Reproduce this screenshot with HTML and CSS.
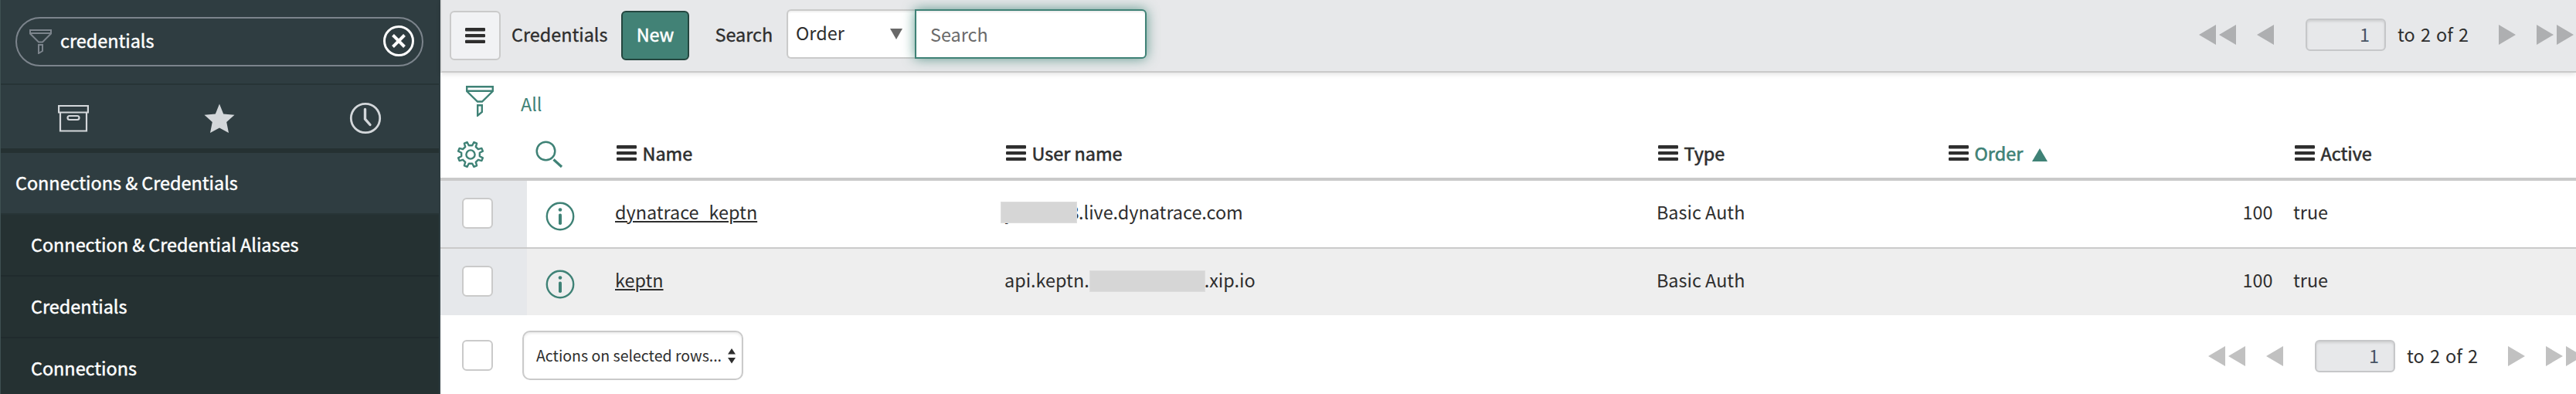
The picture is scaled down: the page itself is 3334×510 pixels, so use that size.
FILE: index.html
```html
<!DOCTYPE html>
<html lang="en">
<head>
<meta charset="utf-8">
<title>Credentials</title>
<link rel="stylesheet" href="styles.css">
</head>
<body>
<svg class="defs" width="0" height="0">
  <symbol id="funnel" viewBox="0 0 36 40">
    <path d="M1.2 1.2H34.8V7L21 20.5H15L1.2 7ZM1 6.7H35M15.2 25.2H20.8V34L15.2 38.6Z" fill="none" stroke="currentColor" stroke-width="2.4"/>
  </symbol>
  <symbol id="bars" viewBox="0 0 26 20">
    <path d="M0 1.2Q0 0 1.2 0H24.8Q26 0 26 1.2V3.4Q26 4.4 24.8 4.4H1.2Q0 4.4 0 3.4ZM0 9.2Q0 8 1.2 8H24.8Q26 8 26 9.2V11.2Q26 12.3 24.8 12.3H1.2Q0 12.3 0 11.2ZM0 17Q0 15.8 1.2 15.8H24.8Q26 15.8 26 17V18.9Q26 20 24.8 20H1.2Q0 20 0 18.9Z" fill="currentColor"/>
  </symbol>
  <symbol id="info" viewBox="0 0 38 38">
    <circle cx="19" cy="19" r="17.2" fill="none" stroke="currentColor" stroke-width="2.4"/>
    <circle cx="19" cy="10.5" r="2.3" fill="currentColor"/>
    <rect x="17" y="15.5" width="4" height="14.5" rx="1.8" fill="currentColor"/>
  </symbol>
  <symbol id="prev" viewBox="0 0 22 26"><path d="M22 0V26L0 13Z" fill="currentColor"/></symbol>
  <symbol id="next" viewBox="0 0 22 26"><path d="M0 0V26L22 13Z" fill="currentColor"/></symbol>
</svg>
<div class="app">
  <aside class="nav">
    <div class="nav-filter">
      <div class="pill">
        <svg class="pill-funnel" width="29" height="32" viewBox="0 0 29 32"><path d="M1 1H28V5.5L17 16.5H12L1 5.5ZM1 5H28M12 20H17V28L12 31Z" fill="none" stroke="currentColor" stroke-width="2"/></svg>
        <span class="pill-text">credentials</span>
        <svg width="40" height="40" viewBox="0 0 40 40"><circle cx="20" cy="20" r="18.5" fill="none" stroke="#fff" stroke-width="3"/><path d="M12.5 12.5L27.5 27.5M27.5 12.5L12.5 27.5" stroke="#fff" stroke-width="4"/></svg>
      </div>
    </div>
    <div class="nav-tabs">
      <div class="tab"><svg width="40" height="40" viewBox="0 0 40 40" fill="none" stroke="currentColor" stroke-width="2.2"><path d="M1.1 4H38.9V12.5H1.1ZM3 12.5V36.5H37V12.5"/><rect x="12.5" y="17" width="15" height="5" rx="2.5"/></svg></div>
      <div class="tab"><svg width="40" height="40" viewBox="0 0 40 40"><path d="M20 1.5L25.2 14.5L39.5 15.8L29.2 25L32 39L20 32.5L8 39L10.8 25L.5 15.8L14.8 14.5Z" fill="currentColor"/></svg></div>
      <div class="tab"><svg width="42" height="42" viewBox="0 0 42 42" fill="none" stroke="currentColor"><circle cx="21" cy="21" r="18.7" stroke-width="2.8"/><path d="M20.5 9.5V22L27 29.5" stroke-width="3.4" stroke-linecap="round"/></svg></div>
    </div>
    <div class="nav-head">Connections &amp; Credentials</div>
    <div class="nav-item">Connection &amp; Credential Aliases</div>
    <div class="nav-item">Credentials</div>
    <div class="nav-item">Connections</div>
  </aside>
  <main class="main">
    <header class="toolbar">
      <button class="menu-btn"><svg width="26" height="20"><use href="#bars"/></svg></button>
      <span class="title">Credentials</span>
      <button class="new-btn">New</button>
      <span class="search-label">Search</span>
      <div class="select"><span>Order</span><svg width="16" height="14" viewBox="0 0 16 14"><path d="M0 0H16L8 14Z" fill="#696969"/></svg></div>
      <div class="search-input">Search</div>
      <div class="pager pager-top">
        <svg class="tri" width="22" height="26"><use href="#prev"/></svg>
        <svg class="tri near" width="22" height="26"><use href="#prev"/></svg>
        <svg class="tri far" width="22" height="26"><use href="#prev"/></svg>
        <div class="page-input">1</div>
        <span class="page-text">to 2 of 2</span>
        <svg class="tri" width="22" height="26"><use href="#next"/></svg>
        <svg class="tri far" width="22" height="26"><use href="#next"/></svg>
        <svg class="tri near" width="22" height="26"><use href="#next"/></svg>
      </div>
    </header>
    <div class="crumbs">
      <svg class="crumb-funnel" width="36" height="40"><use href="#funnel"/></svg>
      <span class="crumb">All</span>
    </div>
    <div class="row head">
      <div class="c-gear"><svg width="36" height="36" viewBox="0 0 36 36" fill="none" stroke="#3f8276" stroke-width="2.4" stroke-linejoin="round"><circle cx="18" cy="18" r="5.6"/><path d="M29.8 20.2L33.9 22.4L32.4 26.1L27.9 24.8L24.8 27.9L26.1 32.4L22.4 33.9L20.2 29.8H15.8L13.6 33.9L9.9 32.4L11.2 27.9L8.1 24.8L3.6 26.1L2.1 22.4L6.2 20.2V15.8L2.1 13.6L3.6 9.9L8.1 11.2L11.2 8.1L9.9 3.6L13.6 2.1L15.8 6.2H20.2L22.4 2.1L26.1 3.6L24.8 8.1L27.9 11.2L32.4 9.9L33.9 13.6L29.8 15.8Z"/></svg></div>
      <div class="c-find"><svg width="36" height="36" viewBox="0 0 36 36" fill="none" stroke="#3f8276"><circle cx="13.5" cy="13.5" r="11.8" stroke-width="2.5"/><path d="M23.5 24.5L34 34" stroke-width="3.2"/></svg></div>
      <div class="c-name th"><svg width="26" height="20"><use href="#bars"/></svg><span>Name</span></div>
      <div class="c-user th"><svg width="26" height="20"><use href="#bars"/></svg><span>User name</span></div>
      <div class="c-type th"><svg width="26" height="20"><use href="#bars"/></svg><span>Type</span></div>
      <div class="c-order-head th"><svg width="26" height="20"><use href="#bars"/></svg><span class="sorted">Order</span><svg class="asc" width="20" height="17" viewBox="0 0 20 17"><path d="M0 17H20L10 0Z" fill="#3f8276"/></svg></div>
      <div class="c-active th"><svg width="26" height="20"><use href="#bars"/></svg><span>Active</span></div>
    </div>
    <div class="row body-row">
      <div class="c-check"><i class="box"></i></div>
      <div class="c-info"><svg width="38" height="38"><use href="#info"/></svg></div>
      <div class="c-name"><a class="link">dynatrace_keptn</a></div>
      <div class="c-user"><span class="lead">y<i class="redact"></i></span><span class="tail">8</span>.live.dynatrace.com</div>
      <div class="c-type">Basic Auth</div>
      <div class="c-order">100</div>
      <div class="c-active">true</div>
    </div>
    <div class="row body-row even">
      <div class="c-check"><i class="box"></i></div>
      <div class="c-info"><svg width="38" height="38"><use href="#info"/></svg></div>
      <div class="c-name"><a class="link">keptn</a></div>
      <div class="c-user">api.keptn.<i class="redact-inline"></i>.xip.io</div>
      <div class="c-type">Basic Auth</div>
      <div class="c-order">100</div>
      <div class="c-active">true</div>
    </div>
    <footer class="footer">
      <i class="box"></i>
      <div class="actions"><span>Actions on selected rows...</span><svg width="10" height="20" viewBox="0 0 10 20"><path d="M0 7.5L5 0L10 7.5ZM0 12H10L5 19.5Z" fill="#2e2e2e"/></svg></div>
      <div class="pager pager-bottom">
        <svg class="tri" width="22" height="26"><use href="#prev"/></svg>
        <svg class="tri near" width="22" height="26"><use href="#prev"/></svg>
        <svg class="tri far" width="22" height="26"><use href="#prev"/></svg>
        <div class="page-input">1</div>
        <span class="page-text">to 2 of 2</span>
        <svg class="tri" width="22" height="26"><use href="#next"/></svg>
        <svg class="tri far" width="22" height="26"><use href="#next"/></svg>
        <svg class="tri near" width="22" height="26"><use href="#next"/></svg>
      </div>
    </footer>
  </main>
</div>
</body>
</html>
```
FILE: styles.css
```css
* { box-sizing: border-box; }
body {
  margin: 0;
  overflow: hidden;
  background: #fff;
  color: #2e2e2e;
  font: 23.4px/32px "Noto Sans CJK SC", "Noto Sans", sans-serif;
}
svg { display: block; flex: none; }
.defs { position: absolute; }
.app { display: flex; width: 3334px; height: 510px; overflow: hidden; }

/* Navigator */
.nav {
  flex: none;
  width: 570px;
  border-left: 1px solid #3f5052;
  border-right: 2px solid #2f3d41;
  background: #253132;
  color: #fff;
  -webkit-text-stroke: .45px #fff;
}
.nav-filter {
  height: 110px;
  padding: 22px 20px 0 19px;
  border-bottom: 2px solid #273436;
  background: #2f3d41;
}
.pill {
  display: flex;
  height: 64px;
  padding: 9px 10px 0 16px;
  border: 2px solid #7c848c;
  border-radius: 32px;
}
.pill-funnel { margin-top: 5px; color: #7c848c; }
.pill-text { flex: 1; margin: 3px 0 0 11px; }
.nav-tabs {
  display: grid;
  grid-template-columns: repeat(3, 189px);
  height: 88px;
  border-bottom: 6px solid #253132;
  background: #2f3d41;
  color: #d3d7da;
}
.tab { display: flex; align-items: center; justify-content: center; padding: 4px 2px 0 0; }
.nav-head {
  height: 80px;
  padding: 22px 0 0 19px;
  border-bottom: 2px solid #273436;
  background: #2f3d41;
}
.nav-item {
  height: 80px;
  padding: 22px 0 0 39px;
  border-bottom: 2px solid #202b2d;
}

/* Toolbar */
.main { flex: 1; min-width: 0; background: #fff; }
.toolbar {
  display: flex;
  height: 94px;
  padding: 12px 0 0 10px;
  border-left: 2px solid #dcddde;
  border-bottom: 2px solid #cacaca;
  background: #e7e8ea;
  box-shadow: 0 2px 6px rgba(0, 0, 0, .12);
}
.menu-btn, .new-btn {
  display: flex;
  align-items: center;
  justify-content: center;
  height: 64px;
  margin: 2px 0 0;
  border-radius: 6px;
  font: inherit;
}
.menu-btn { width: 66px; padding: 0; border: 2px solid #cacaca; background: #f1f2f4; color: #2e2e2e; }
.title { width: 142px; margin: 16px 0 0 14px; -webkit-text-stroke: .35px; }
.new-btn {
  width: 88px;
  padding: 0 0 4px;
  border: 2px solid #24463f;
  background: #428276;
  color: #fff;
  -webkit-text-stroke: .5px;
}
.search-label { width: 92.5px; margin: 16px 0 0 33.5px; -webkit-text-stroke: .35px; }
.select {
  display: flex;
  justify-content: space-between;
  width: 166px;
  height: 64px;
  padding: 12px 16px 0 10px;
  border: 2px solid #cacaca;
  border-right: 0;
  border-radius: 6px 0 0 6px;
  background: #fff;
  box-shadow: inset 0 2px 2px rgba(0, 0, 0, .06);
}
.select svg { margin-top: 11px; }
.search-input {
  width: 300px;
  height: 64px;
  padding: 14px 0 0 18px;
  border: 2px solid #3f8276;
  border-radius: 0 6px 6px 0;
  background: #fff;
  box-shadow: inset 0 2px 2px rgba(0, 0, 0, .08), 0 0 16px rgba(50, 125, 110, .75);
  color: #6a6a6a;
}

/* Pagination */
.pager { display: flex; color: #aeafb1; }
.pager-top { margin: 12px 0 0 1362px; }
.tri { margin-top: 8px; }
.near { margin-left: 4px; }
.far { margin-left: 27px; }
.page-input {
  width: 104px;
  height: 42px;
  margin-left: 41px;
  padding: 2px 19px 0 0;
  border: 2px solid #c6c7c9;
  border-radius: 6px;
  background: #e7e8ea;
  box-shadow: inset 0 2px 3px rgba(0, 0, 0, .1);
  color: #485464;
  text-align: right;
}
.page-text { width: 131px; margin: 4px 0 0 15px; color: #2e2e2e; word-spacing: 2px; white-space: nowrap; }

/* List */
.crumbs { display: flex; height: 69px; padding: 17px 0 0 33px; color: #3f8276; }
.crumb { margin: 7px 0 0 35px; }
.row { display: grid; grid-template-columns: 112px 102px 504px 846px 376px 446px 1fr; }
.head { height: 71px; padding-top: 19px; border-bottom: 4px solid #cacaca; }
.c-gear { padding-left: 21px; }
.c-find { padding-left: 11px; }
.th { display: flex; padding-top: 6px; -webkit-text-stroke: .6px; }
.th span { margin: -6px 0 0 7.5px; }
.head .c-name, .head .c-user, .head .c-active { padding-left: 14px; }
.head .c-type, .head .c-order-head { padding-left: 12px; }
.sorted { color: #3f8276; }
.asc { margin: 4px 0 0 12px; }
.body-row { height: 88px; border-bottom: 2px solid #cacaca; }
.body-row > div { padding-top: 24px; white-space: nowrap; }
.body-row .c-check { padding: 22px 0 0 28px; background: #e6e8eb; }
.body-row .c-info { padding: 27px 0 0 24px; color: #3f8276; }
.c-name, .c-user { padding-left: 12px; }
.c-type { padding-left: 10px; }
.c-order { padding-right: 14.5px; text-align: right; }
.c-active { padding-left: 12px; }
.even { height: 86px; border-bottom: 0; background: #eee; }
.link { text-decoration: underline; text-decoration-thickness: 2px; text-underline-offset: 2px; }
.box {
  display: block;
  flex: none;
  width: 40px;
  height: 40px;
  border: 2px solid #cacaca;
  border-radius: 6px;
  background: #fff;
}
.lead { position: relative; display: inline-block; width: 83.5px; }
.tail { letter-spacing: -.5px; }
.redact {
  position: absolute;
  left: -5px;
  top: 3px;
  width: 99px;
  height: 28px;
  border: 1px solid #dedede;
  background: #d6d6d6;
}
.redact-inline {
  display: inline-block;
  width: 150px;
  height: 28px;
  margin: 0 -1.5px 0 .5px;
  border: 1px solid #dedede;
  background: #d6d6d6;
  vertical-align: -6px;
}

/* Footer */
.footer { display: flex; height: 102px; padding: 20px 0 0 28px; }
.footer > .box { margin-top: 12px; }
.actions {
  display: flex;
  flex: none;
  justify-content: space-between;
  width: 286px;
  height: 64px;
  margin-left: 38px;
  padding: 14px 8px 0 16px;
  border: 2px solid #cacaca;
  border-radius: 10px;
  box-shadow: inset 0 2px 3px rgba(0, 0, 0, .08);
  font-size: 19.5px;
  white-space: nowrap;
}
.actions svg { margin-top: 7px; }
.pager-bottom { flex: none; margin: 12px 0 0 1896px; color: #c1c1c1; }
```
